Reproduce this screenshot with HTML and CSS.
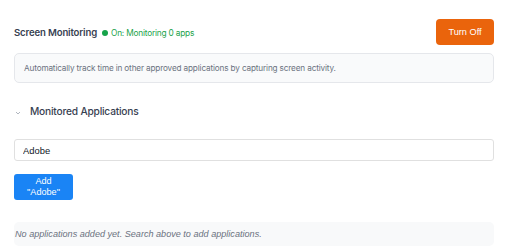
FILE: index.html
```html
<!DOCTYPE html>
<html lang="en">
<head>
    <meta charset="UTF-8">
    <title>Screen Monitoring</title>
    <link rel="stylesheet" href="styles.css">
</head>
<body>
<div class="panel">
    <div class="header">
        <div class="title-wrap">
            <span class="title">Screen Monitoring</span>
            <span class="status"><i class="dot"></i>On: Monitoring 0 apps</span>
        </div>
        <button class="off">Turn Off</button>
    </div>
    <div class="desc">Automatically track time in other approved applications by capturing screen activity.</div>

    <div class="section">
        <span class="chevron">
            <svg width="6" height="4" viewBox="0 0 6 4"><path d="M1 1l2 2 2-2" fill="none" stroke="#9ca3af" stroke-width="0.8"/></svg>
        </span>
        <span class="section-title">Monitored Applications</span>
    </div>

    <input class="search" type="text" value="Adobe">
    <div class="add-row">
        <button class="add">Add<br>"Adobe"</button>
    </div>
    <div class="empty">No applications added yet. Search above to add applications.</div>
</div>
</body>
</html>
```

FILE: styles.css
```css
* {
    padding: 0;
    margin: 0;
    box-sizing: border-box;
}

body {
    background: #FFFFFF;
    font-family: Inter, "Liberation Sans", sans-serif;
    color: #374151;
}

.panel {
    width: 480px;
    margin-left: 14px;
    padding-top: 19px;
    display: flex;
    flex-direction: column;
}

.header {
    height: 26px;
    display: flex;
    justify-content: space-between;
    align-items: center;
}

.title-wrap {
    display: flex;
    align-items: center;
    gap: 5px;
    padding-top: 1px;
}

.title {
    font-size: 9.6px;
    font-weight: 600;
    letter-spacing: -0.15px;
    color: #374151;
}

.status {
    display: flex;
    align-items: center;
    gap: 3px;
    font-size: 8.3px;
    letter-spacing: -0.2px;
    color: #22a34a;
}

.dot {
    width: 6px;
    height: 6px;
    border-radius: 50%;
    background: #16a34a;
}

.off {
    width: 58px;
    height: 26px;
    background: #ea640c;
    border: none;
    border-radius: 4px;
    color: #FFFFFF;
    font-family: "Liberation Sans", Arial, sans-serif;
    font-size: 9.2px;
}

.desc {
    margin-top: 8px;
    height: 30px;
    padding: 0 9px;
    display: flex;
    align-items: center;
    background: #f9fafb;
    border: 1px solid #e5e7eb;
    border-radius: 5px;
    font-size: 8.2px;
    letter-spacing: -0.15px;
    color: #6b7280;
}

.section {
    margin-top: 18px;
    height: 20px;
    display: flex;
    align-items: center;
}

.chevron {
    width: 16px;
    padding-left: 1px;
    padding-top: 4px;
    display: flex;
}

.section-title {
    font-size: 10.2px;
    font-weight: 500;
    letter-spacing: -0.2px;
    color: #374151;
}

.search {
    margin-top: 18px;
    height: 22px;
    width: 100%;
    padding: 0 8px;
    border: 1px solid #e0e0e0;
    border-radius: 3px;
    font-family: "Liberation Sans", Arial, sans-serif;
    font-size: 9.4px;
    color: #111827;
    outline: none;
}

.add-row {
    margin-top: 13px;
    display: flex;
}

.add {
    width: 59px;
    height: 26px;
    background: #1a84f5;
    border: none;
    border-radius: 3px;
    color: #FFFFFF;
    font-family: "Liberation Sans", Arial, sans-serif;
    font-size: 9.1px;
    line-height: 11px;
}

.empty {
    margin-top: 22px;
    height: 24px;
    padding: 0 1px;
    display: flex;
    align-items: center;
    background: #f8f9fa;
    border-radius: 5px;
    font-family: "Liberation Sans", Arial, sans-serif;
    font-style: italic;
    font-size: 9.1px;
    color: #6b7280;
}
```
